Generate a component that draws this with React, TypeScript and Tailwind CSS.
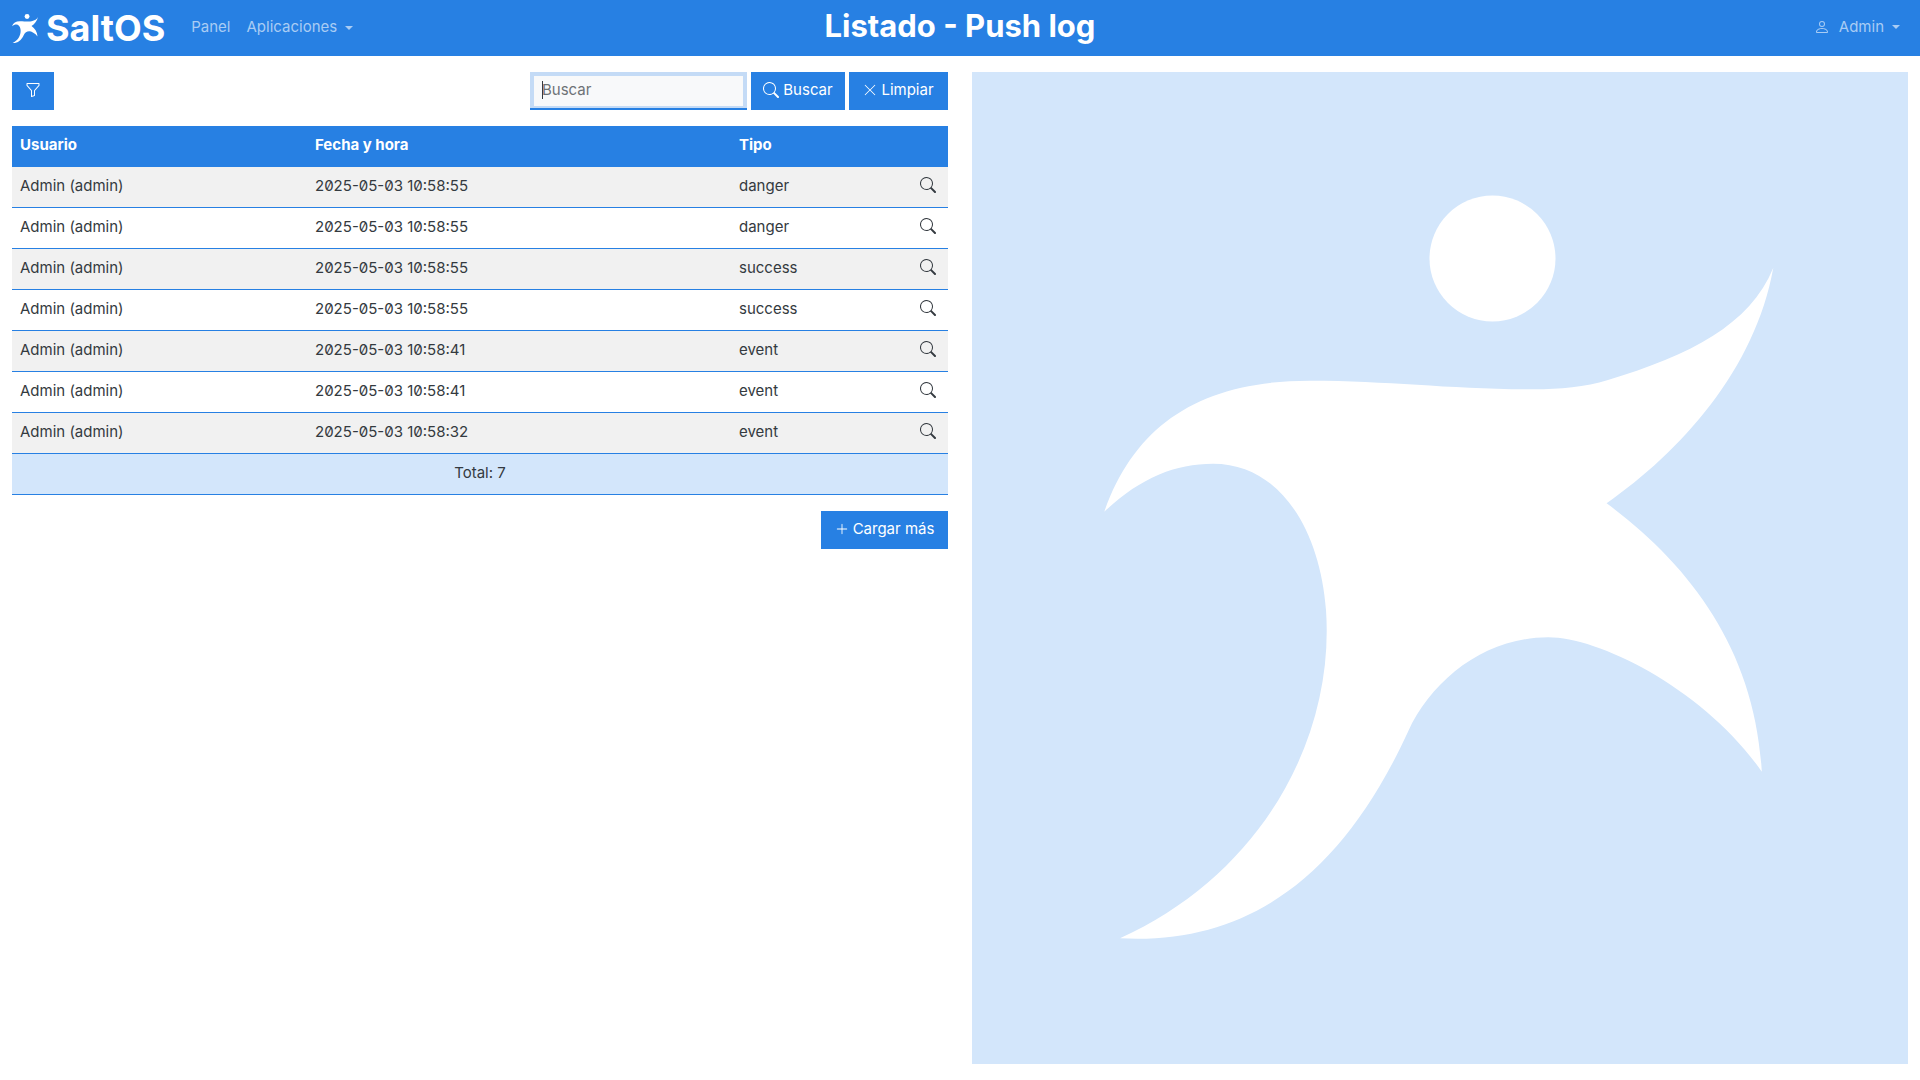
import { BsFunnel, BsSearch, BsXLg, BsPlusLg, BsPerson } from 'react-icons/bs';

const ROWS = [
  { date: '2025-05-03 10:58:55', type: 'danger' },
  { date: '2025-05-03 10:58:55', type: 'danger' },
  { date: '2025-05-03 10:58:55', type: 'success' },
  { date: '2025-05-03 10:58:55', type: 'success' },
  { date: '2025-05-03 10:58:41', type: 'event' },
  { date: '2025-05-03 10:58:41', type: 'event' },
  { date: '2025-05-03 10:58:32', type: 'event' },
];

// figure traced from the reference, in page pixels
const FIGURE =
  'M1773.3 267.7C1750 325 1690 355 1608 380C1585 387 1560 389.3 1534 389.3C1450 389.3 1390 380.7 1310 380.7C1200 380.7 1135 425 1104.3 511.7C1140 478 1175 463.7 1213 463.7C1280 463.7 1320 530 1326 610C1335 740 1260 875 1120 938.3C1245 945 1340 880 1408 731.7C1432 679.5 1485 637.3 1548.3 637.3C1600 637.3 1705 690 1761.8 771.7C1755 650 1690 565 1606.6 503.3C1680 452 1755 370 1773.3 267.7Z';

function Logo({ className, viewBox }: { className?: string; viewBox: string }) {
  return (
    <svg viewBox={viewBox} className={className} fill="currentColor">
      <circle cx="1492.5" cy="258.5" r="63" />
      <path d={FIGURE} />
    </svg>
  );
}

function Caret() {
  return <span className="ml-2 inline-block border-x-[4.5px] border-t-[4.5px] border-x-transparent border-t-current align-middle" />;
}

function Navbar() {
  return (
    <nav className="grid h-14 grid-cols-[1fr_auto_1fr] items-center bg-[#2780e3] px-3 pb-[2px]">
      <div className="flex items-center">
        <Logo viewBox="1104 195 670 744" className="mt-[3px] h-[29px] w-[26px] text-white" />
        <span className="mt-[2px] ml-2 text-[36px] leading-none font-bold text-white">SaltOS</span>
        <a className="ml-[26px] text-[15px] text-[#a9ccf4]">Panel</a>
        <a className="ml-4 text-[15px] text-[#a9ccf4]">
          Aplicaciones
          <Caret />
        </a>
      </div>
      <h1 className="mb-[3px] text-[31px] leading-none font-bold text-white">Listado - Push log</h1>
      <div className="flex items-center justify-end pr-[8px] text-[15px] text-[#a9ccf4]">
        <BsPerson size={16} className="mr-[9px]" />
        Admin
        <Caret />
      </div>
    </nav>
  );
}

function Toolbar() {
  return (
    <div className="flex h-[38px] items-stretch">
      <button className="flex w-[42px] items-center justify-center bg-[#2780e3] pb-[2px] text-white">
        <BsFunnel size={16} />
      </button>
      <div className="ml-auto w-[217px] border-b-2 border-[#2780e3] bg-[#c4dbf6] p-1 pb-[2px]">
        <div className="flex h-full items-center bg-[#f8f9fa] pb-[2px] pl-2 text-[15px] text-[#6d7276]">
          <span className="h-[18px] w-px bg-[#343a40]" />
          <span className="-ml-px">Buscar</span>
        </div>
      </div>
      <button className="ml-1 flex w-[94px] items-center justify-center gap-1 bg-[#2780e3] pb-[2px] text-[15px] text-white">
        <BsSearch size={16} />
        Buscar
      </button>
      <button className="ml-1 flex w-[99px] items-center justify-center gap-1 bg-[#2780e3] pb-[2px] text-[15px] text-white">
        <BsXLg size={14} />
        Limpiar
      </button>
    </div>
  );
}

function PushTable() {
  return (
    <table className="mt-4 w-full table-fixed border-separate border-spacing-0 text-[15px] text-[#343a40]">
      <thead>
        <tr className="h-[41px] bg-[#2780e3] text-left font-bold text-white">
          <th className="w-[295px] px-2 pb-[2px]">Usuario</th>
          <th className="w-[424px] px-2 pb-[2px]">Fecha y hora</th>
          <th className="px-2 pb-[2px]">Tipo</th>
          <th className="w-[44px]" />
        </tr>
      </thead>
      <tbody>
        {ROWS.map((r, i) => (
          <tr key={i} className={i % 2 === 0 ? 'h-[41px] bg-[#f1f1f1] [&>td]:border-b [&>td]:border-[#2780e3]' : 'h-[41px] bg-white [&>td]:border-b [&>td]:border-[#2780e3]'}>
            <td className="px-2 pb-[2px]">Admin (admin)</td>
            <td className="px-2 pb-[2px] slashed-zero">{r.date}</td>
            <td className="px-2 pb-[2px]">{r.type}</td>
            <td className="pr-3 pb-1">
              <BsSearch size={16} className="ml-auto" />
            </td>
          </tr>
        ))}
        <tr className="h-[41px] bg-[#d3e6fb] [&>td]:border-b [&>td]:border-[#2780e3]">
          <td colSpan={4} className="pb-[2px] text-center">Total: 7</td>
        </tr>
      </tbody>
    </table>
  );
}

export default function App() {
  return (
    <div className="min-h-[1080px] bg-white font-['Inter','Noto_Sans',sans-serif]">
      <Navbar />
      <main className="flex gap-6 px-3 pt-4">
        <section className="w-[936px]">
          <Toolbar />
          <PushTable />
          <div className="mt-4 flex justify-end">
            <button className="flex h-[38px] w-[127px] items-center justify-center gap-1 bg-[#2780e3] pb-[2px] text-[15px] text-white">
              <BsPlusLg size={14} />
              Cargar más
            </button>
          </div>
        </section>
        <aside className="h-[992px] w-[936px] bg-[#d3e6fb]">
          <Logo viewBox="972 72 936 992" className="h-full w-full text-white" />
        </aside>
      </main>
    </div>
  );
}
